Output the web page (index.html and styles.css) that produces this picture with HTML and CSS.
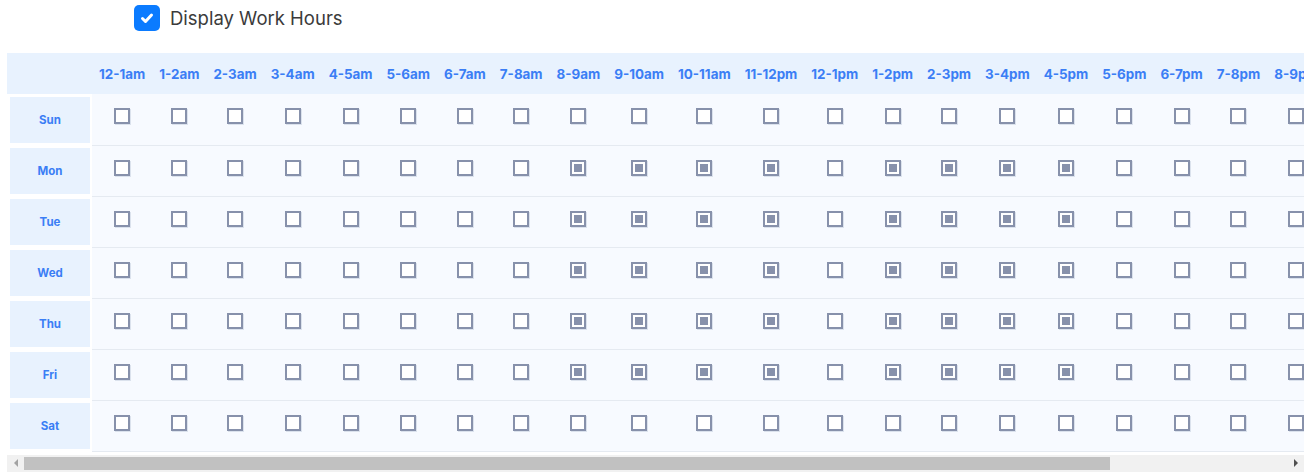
FILE: index.html
```html
<!DOCTYPE html>
<html lang="en">
<head>
<meta charset="utf-8">
<title>Work Hours</title>
<link rel="stylesheet" href="styles.css">
</head>
<body>
<div class="top">
  <span class="master"><svg width="26" height="26" viewBox="0 0 26 26"><polyline points="8.5,13.5 11.5,16.5 17.5,10" fill="none" stroke="#fff" stroke-width="3" stroke-linecap="round" stroke-linejoin="round"/></svg></span>
  <span class="label">Display Work Hours</span>
</div>
<div class="wrap">
<table class="grid">
<thead>
<tr>
<th class="corner"></th>
<th>12-1am</th><th>1-2am</th><th>2-3am</th><th>3-4am</th><th>4-5am</th><th>5-6am</th><th>6-7am</th><th>7-8am</th><th>8-9am</th><th>9-10am</th><th>10-11am</th><th>11-12pm</th><th>12-1pm</th><th>1-2pm</th><th>2-3pm</th><th>3-4pm</th><th>4-5pm</th><th>5-6pm</th><th>6-7pm</th><th>7-8pm</th><th>8-9pm</th><th>9-10pm</th><th>10-11pm</th><th>11-12am</th>
</tr>
</thead>
<tbody>
<tr>
<td class="day"><div class="daybox">Sun</div></td>
<td class="c"><i class="cb"></i></td><td class="c"><i class="cb"></i></td><td class="c"><i class="cb"></i></td><td class="c"><i class="cb"></i></td><td class="c"><i class="cb"></i></td><td class="c"><i class="cb"></i></td><td class="c"><i class="cb"></i></td><td class="c"><i class="cb"></i></td><td class="c"><i class="cb"></i></td><td class="c"><i class="cb"></i></td><td class="c"><i class="cb"></i></td><td class="c"><i class="cb"></i></td><td class="c"><i class="cb"></i></td><td class="c"><i class="cb"></i></td><td class="c"><i class="cb"></i></td><td class="c"><i class="cb"></i></td><td class="c"><i class="cb"></i></td><td class="c"><i class="cb"></i></td><td class="c"><i class="cb"></i></td><td class="c"><i class="cb"></i></td><td class="c"><i class="cb"></i></td><td class="c"><i class="cb"></i></td><td class="c"><i class="cb"></i></td><td class="c"><i class="cb"></i></td>
</tr>
<tr>
<td class="day"><div class="daybox">Mon</div></td>
<td class="c"><i class="cb"></i></td><td class="c"><i class="cb"></i></td><td class="c"><i class="cb"></i></td><td class="c"><i class="cb"></i></td><td class="c"><i class="cb"></i></td><td class="c"><i class="cb"></i></td><td class="c"><i class="cb"></i></td><td class="c"><i class="cb"></i></td><td class="c"><i class="cb on"></i></td><td class="c"><i class="cb on"></i></td><td class="c"><i class="cb on"></i></td><td class="c"><i class="cb on"></i></td><td class="c"><i class="cb"></i></td><td class="c"><i class="cb on"></i></td><td class="c"><i class="cb on"></i></td><td class="c"><i class="cb on"></i></td><td class="c"><i class="cb on"></i></td><td class="c"><i class="cb"></i></td><td class="c"><i class="cb"></i></td><td class="c"><i class="cb"></i></td><td class="c"><i class="cb"></i></td><td class="c"><i class="cb"></i></td><td class="c"><i class="cb"></i></td><td class="c"><i class="cb"></i></td>
</tr>
<tr>
<td class="day"><div class="daybox">Tue</div></td>
<td class="c"><i class="cb"></i></td><td class="c"><i class="cb"></i></td><td class="c"><i class="cb"></i></td><td class="c"><i class="cb"></i></td><td class="c"><i class="cb"></i></td><td class="c"><i class="cb"></i></td><td class="c"><i class="cb"></i></td><td class="c"><i class="cb"></i></td><td class="c"><i class="cb on"></i></td><td class="c"><i class="cb on"></i></td><td class="c"><i class="cb on"></i></td><td class="c"><i class="cb on"></i></td><td class="c"><i class="cb"></i></td><td class="c"><i class="cb on"></i></td><td class="c"><i class="cb on"></i></td><td class="c"><i class="cb on"></i></td><td class="c"><i class="cb on"></i></td><td class="c"><i class="cb"></i></td><td class="c"><i class="cb"></i></td><td class="c"><i class="cb"></i></td><td class="c"><i class="cb"></i></td><td class="c"><i class="cb"></i></td><td class="c"><i class="cb"></i></td><td class="c"><i class="cb"></i></td>
</tr>
<tr>
<td class="day"><div class="daybox">Wed</div></td>
<td class="c"><i class="cb"></i></td><td class="c"><i class="cb"></i></td><td class="c"><i class="cb"></i></td><td class="c"><i class="cb"></i></td><td class="c"><i class="cb"></i></td><td class="c"><i class="cb"></i></td><td class="c"><i class="cb"></i></td><td class="c"><i class="cb"></i></td><td class="c"><i class="cb on"></i></td><td class="c"><i class="cb on"></i></td><td class="c"><i class="cb on"></i></td><td class="c"><i class="cb on"></i></td><td class="c"><i class="cb"></i></td><td class="c"><i class="cb on"></i></td><td class="c"><i class="cb on"></i></td><td class="c"><i class="cb on"></i></td><td class="c"><i class="cb on"></i></td><td class="c"><i class="cb"></i></td><td class="c"><i class="cb"></i></td><td class="c"><i class="cb"></i></td><td class="c"><i class="cb"></i></td><td class="c"><i class="cb"></i></td><td class="c"><i class="cb"></i></td><td class="c"><i class="cb"></i></td>
</tr>
<tr>
<td class="day"><div class="daybox">Thu</div></td>
<td class="c"><i class="cb"></i></td><td class="c"><i class="cb"></i></td><td class="c"><i class="cb"></i></td><td class="c"><i class="cb"></i></td><td class="c"><i class="cb"></i></td><td class="c"><i class="cb"></i></td><td class="c"><i class="cb"></i></td><td class="c"><i class="cb"></i></td><td class="c"><i class="cb on"></i></td><td class="c"><i class="cb on"></i></td><td class="c"><i class="cb on"></i></td><td class="c"><i class="cb on"></i></td><td class="c"><i class="cb"></i></td><td class="c"><i class="cb on"></i></td><td class="c"><i class="cb on"></i></td><td class="c"><i class="cb on"></i></td><td class="c"><i class="cb on"></i></td><td class="c"><i class="cb"></i></td><td class="c"><i class="cb"></i></td><td class="c"><i class="cb"></i></td><td class="c"><i class="cb"></i></td><td class="c"><i class="cb"></i></td><td class="c"><i class="cb"></i></td><td class="c"><i class="cb"></i></td>
</tr>
<tr>
<td class="day"><div class="daybox">Fri</div></td>
<td class="c"><i class="cb"></i></td><td class="c"><i class="cb"></i></td><td class="c"><i class="cb"></i></td><td class="c"><i class="cb"></i></td><td class="c"><i class="cb"></i></td><td class="c"><i class="cb"></i></td><td class="c"><i class="cb"></i></td><td class="c"><i class="cb"></i></td><td class="c"><i class="cb on"></i></td><td class="c"><i class="cb on"></i></td><td class="c"><i class="cb on"></i></td><td class="c"><i class="cb on"></i></td><td class="c"><i class="cb"></i></td><td class="c"><i class="cb on"></i></td><td class="c"><i class="cb on"></i></td><td class="c"><i class="cb on"></i></td><td class="c"><i class="cb on"></i></td><td class="c"><i class="cb"></i></td><td class="c"><i class="cb"></i></td><td class="c"><i class="cb"></i></td><td class="c"><i class="cb"></i></td><td class="c"><i class="cb"></i></td><td class="c"><i class="cb"></i></td><td class="c"><i class="cb"></i></td>
</tr>
<tr>
<td class="day"><div class="daybox">Sat</div></td>
<td class="c"><i class="cb"></i></td><td class="c"><i class="cb"></i></td><td class="c"><i class="cb"></i></td><td class="c"><i class="cb"></i></td><td class="c"><i class="cb"></i></td><td class="c"><i class="cb"></i></td><td class="c"><i class="cb"></i></td><td class="c"><i class="cb"></i></td><td class="c"><i class="cb"></i></td><td class="c"><i class="cb"></i></td><td class="c"><i class="cb"></i></td><td class="c"><i class="cb"></i></td><td class="c"><i class="cb"></i></td><td class="c"><i class="cb"></i></td><td class="c"><i class="cb"></i></td><td class="c"><i class="cb"></i></td><td class="c"><i class="cb"></i></td><td class="c"><i class="cb"></i></td><td class="c"><i class="cb"></i></td><td class="c"><i class="cb"></i></td><td class="c"><i class="cb"></i></td><td class="c"><i class="cb"></i></td><td class="c"><i class="cb"></i></td><td class="c"><i class="cb"></i></td>
</tr>
</tbody>
</table>
</div>
<div class="hscroll">
  <span class="sbtn"><i class="arrow-left"></i></span>
  <span class="track"><span class="thumb"></span></span>
  <span class="sbtn"><i class="arrow-right"></i></span>
</div>
</body>
</html>
```

FILE: styles.css
```css
html, body {
  margin: 0;
  padding: 0;
  background: #ffffff;
  font-family: Inter, "Open Sans", "Liberation Sans", sans-serif;
}

.top {
  display: flex;
  align-items: center;
  gap: 10px;
  padding: 5px 0 0 134px;
}

.master {
  width: 26px;
  height: 26px;
  border-radius: 5px;
  background: #0b7bff;
  display: flex;
  align-items: center;
  justify-content: center;
}

.master svg {
  display: block;
}

.label {
  font-size: 18.5px;
  color: #3b3b3b;
  font-weight: 400;
}

.wrap {
  margin: 22px 0 0 7px;
  width: 1297px;
  overflow: hidden;
}

.grid {
  border-collapse: collapse;
  border-spacing: 0;
  margin-bottom: 2px;
}

.grid th {
  background: #e8f2fe;
  height: 41px;
  padding: 0 7px;
  font-size: 13.4px;
  font-weight: 700;
  color: #3b7ef5;
  white-space: nowrap;
  text-align: center;
  vertical-align: middle;
}

.grid th.corner {
  padding: 0;
}

.grid td.day {
  background: #ffffff;
  padding: 3px 2px 2px 3px;
}

.daybox {
  width: 80px;
  height: 46px;
  background: #e8f2fe;
  display: flex;
  align-items: center;
  justify-content: center;
  font-size: 11.5px;
  font-weight: 700;
  color: #3b7ef5;
}

.grid td.c {
  background: #f7faff;
  border-bottom: 1px solid #e5eaf1;
  padding: 14px 7px 0;
  vertical-align: top;
  text-align: center;
}

.cb {
  display: inline-block;
  width: 16px;
  height: 16px;
  box-sizing: border-box;
  border: 2px solid #8791ab;
  background: #ffffff;
  box-shadow: 1px 1px 0 #dbe2ed;
  vertical-align: top;
}

.cb.on {
  background: #8791ab;
  box-shadow: inset 0 0 0 2px #ffffff, 1px 1px 0 #dbe2ed;
}

/* horizontal scrollbar */
.hscroll {
  display: flex;
  margin: 1px 0 0 7px;
  width: 1297px;
  height: 17px;
  background: #f1f1f1;
}

.sbtn {
  flex: 0 0 17px;
  display: flex;
  align-items: center;
  justify-content: center;
}

.arrow-left {
  width: 0;
  height: 0;
  border-top: 4px solid transparent;
  border-bottom: 4px solid transparent;
  border-right: 4px solid #a3a3a3;
}

.arrow-right {
  width: 0;
  height: 0;
  border-top: 4px solid transparent;
  border-bottom: 4px solid transparent;
  border-left: 4px solid #505050;
}

.track {
  flex: 1;
  display: flex;
  align-items: center;
}

.thumb {
  width: 1086px;
  height: 13px;
  background: #c1c1c1;
}
```
